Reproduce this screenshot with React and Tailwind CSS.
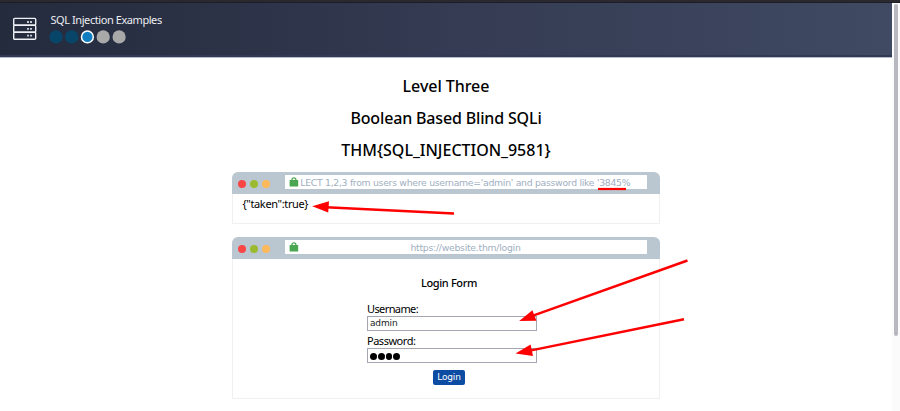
const ubuntu = "font-['Noto_Sans','Liberation_Sans',sans-serif]";
const dejavu = "font-['DejaVu_Sans',sans-serif]";

function ServerIcon() {
  return (
    <svg width="26" height="24" viewBox="0 0 26 24" fill="none" stroke="#eef0f5" strokeWidth="1.4" className="shrink-0">
      <rect x="1.7" y="1.4" width="22" height="6.9" rx="1" />
      <rect x="1.7" y="8.3" width="22" height="7" rx="1" />
      <rect x="1.7" y="15.3" width="22" height="7" rx="1" />
      <path d="M15.2 5h1.6M18.2 5h1.6M15.2 11.8h1.6M18.2 11.8h1.6M15.2 18.6h1.6M18.2 18.6h1.6" strokeWidth="1.8" />
    </svg>
  );
}

function StepDots() {
  return (
    <svg width="80" height="15" viewBox="0 0 80 15" className="mt-[2px]">
      <circle cx="7" cy="7.9" r="6.6" fill="#084669" />
      <circle cx="22.7" cy="7.9" r="6.6" fill="#084669" />
      <circle cx="38.4" cy="7.9" r="5.9" fill="#107dc0" stroke="#fff" strokeWidth="1.5" />
      <circle cx="54.2" cy="7.9" r="6.6" fill="#aaa9a9" />
      <circle cx="70.1" cy="7.9" r="6.6" fill="#aaa9a9" />
    </svg>
  );
}

function LockIcon() {
  return (
    <svg width="10" height="10" viewBox="0 0 10 10" className="mt-[2px] ml-[4.4px] shrink-0">
      <path d="M2.9 4V2.8a2 2 0 0 1 4 0V4" fill="none" stroke="#4ba651" strokeWidth="1.3" />
      <rect x="0.6" y="3.1" width="8.6" height="6.4" rx="0.5" fill="#4ba651" />
    </svg>
  );
}

function BrowserWindow({ address, className, children }) {
  return (
    <section className={"w-[428px] " + className}>
      <div className="flex h-[22px] rounded-t-[6px] bg-[#bac7d0] pl-[6px]">
        <div className="mt-[7.5px] flex gap-1">
          <i className="size-2 rounded-full bg-[#fb4646]" />
          <i className="size-2 rounded-full bg-[#9bba2f]" />
          <i className="size-2 rounded-full bg-[#fdb95a]" />
        </div>
        <div className="mt-[3px] ml-[14.5px] flex h-[14px] w-[362.5px] bg-white">
          <LockIcon />
          {address}
        </div>
      </div>
      <div className="h-[calc(100%-22px)] border border-t-0 border-[#f0f0f1]">{children}</div>
    </section>
  );
}

function Arrow({ from, tip, base }) {
  return (
    <g>
      <path d={from} stroke="#f00" strokeWidth="2.4" />
      <path d={base + tip} fill="#f00" />
    </g>
  );
}

export default function App() {
  return (
    <div className={"relative flex h-[411px] w-[900px] flex-col overflow-hidden bg-white text-black " + ubuntu}>
      <div className="h-[3px] shrink-0 border-b border-[#1d1d25] bg-[#2b2830]" />
      <div className="flex min-h-0 flex-1">
        <main className="flex w-[892px] flex-col">
          <header className="flex h-[55px] shrink-0 border-b border-[#b9bbce] bg-linear-to-r from-[#242b3d] via-[#343b52] to-[#404a63] pl-3 shadow-[inset_0_-2px_0_#303a55]">
            <div className="mt-[14.3px]"><ServerIcon /></div>
            <div className="ml-[11px] pt-[9px]">
              <div className="ml-[1.5px] text-[11px] leading-[15px] tracking-[-0.43px] whitespace-nowrap text-[#eceef3]">SQL Injection Examples</div>
              <StepDots />
            </div>
          </header>
          <div className="flex flex-col items-center">
            <div className="mt-[12px] flex flex-col items-center text-[16px] leading-[32px] font-medium whitespace-nowrap">
              <h1 className="tracking-[-0.05px]">Level Three</h1>
              <h1 className="tracking-[-0.16px]">Boolean Based Blind SQLi</h1>
              <h1 className="tracking-[-0.02px]">THM{"{"}SQL_INJECTION_9581{"}"}</h1>
            </div>
            <BrowserWindow
              className="mt-[6px] h-[52px]"
              address={<span className={"ml-[1.4px] text-[9.3px] leading-[15px] tracking-[-0.29px] whitespace-nowrap text-[#a0afc2] " + dejavu}>LECT 1,2,3 from users where username='admin' and password like '3845%</span>}
            >
              <p className="pt-[2px] pl-[9.5px] text-[11px] leading-[15px] tracking-[-0.36px]">{'{"taken":true}'}</p>
            </BrowserWindow>
            <BrowserWindow
              className="mt-[13px] h-[162px]"
              address={<span className={"ml-[111.5px] text-[9.3px] leading-[15px] tracking-[-0.26px] whitespace-nowrap text-[#a0afc2] " + dejavu}>https://website.thm/login</span>}
            >
              <form className="flex flex-col items-center pl-[6px]">
                <h2 className="mt-4 text-[11px] leading-[15px] font-medium tracking-[-0.37px]">Login Form</h2>
                <div className="mt-[11px] ml-[6px] flex w-[170px] flex-col text-[11px] leading-[15px]">
                  <label className="tracking-[-0.6px]">Username:</label>
                  <div className={"h-[15px] border border-[#a6a6b2] pl-[2px] text-[9px] leading-[13px] tracking-[-0.15px] text-[#222] " + dejavu}>admin</div>
                  <label className="mt-[2px] tracking-[-0.48px]">Password:</label>
                  <div className="flex h-[15px] items-center gap-[0.9px] border border-[#a6a6b2] pl-[2px]">
                    {[0, 1, 2, 3].map((n) => <i key={n} className="mt-[2px] size-[6.9px] rounded-full bg-black" />)}
                  </div>
                </div>
                <button type="button" className={"mt-[7px] h-[15px] w-8 rounded-[2px] bg-[#0c4ca3] text-[9px] leading-[15px] tracking-[-0.2px] text-white " + dejavu}>Login</button>
              </form>
            </BrowserWindow>
          </div>
        </main>
        <aside className="w-2 bg-[#fbfbfc] pt-[1px] pl-[2px]">
          <div className="h-[332px] w-1 rounded-full bg-[#b8b8c0]" />
        </aside>
      </div>
      <svg className="pointer-events-none absolute inset-0" width="900" height="411" fill="none">
        <path d="M598 189h28" stroke="#f00" strokeWidth="2.2" />
        <Arrow from="M454 213.5L326 207.2" base="M329 201.2L328.2 212.6" tip="L312.2 206.2Z" />
        <Arrow from="M687.5 260.5L533 315.7" base="M532.4 310.2L536.4 320.8" tip="L519.2 321Z" />
        <Arrow from="M684 319.2L530 350.6" base="M530.6 344.6L533 356" tip="L515.5 353.5Z" />
      </svg>
    </div>
  );
}
